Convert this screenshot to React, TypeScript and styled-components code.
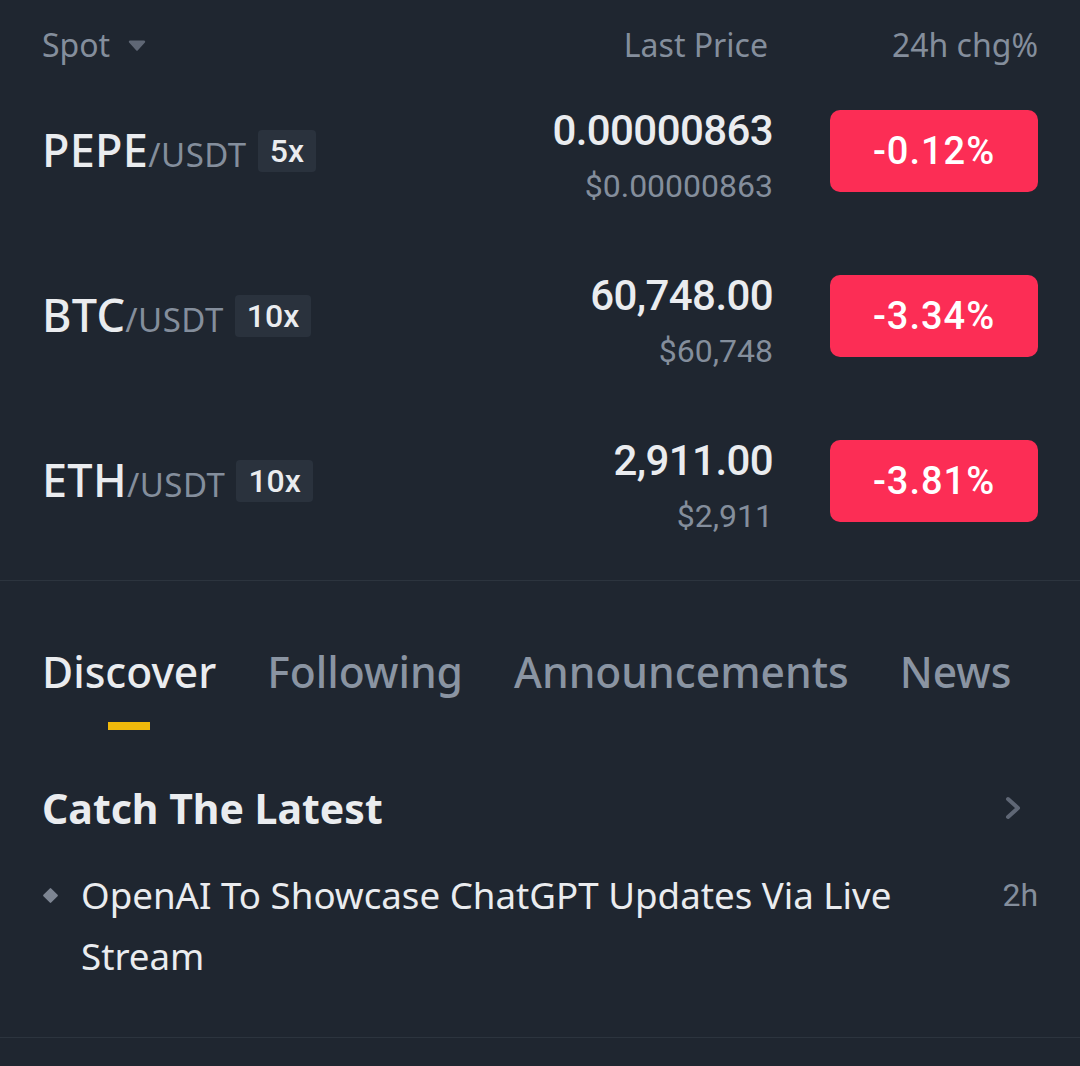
import React from "react";
import styled, { createGlobalStyle } from "styled-components";

const GlobalStyle = createGlobalStyle`
  html, body {
    margin: 0;
    padding: 0;
    background: #1f2630;
  }
  body {
    font-family: "Noto Sans", "Open Sans", sans-serif;
    color: #eaecef;
    -webkit-font-smoothing: antialiased;
  }
  * { box-sizing: border-box; }
`;

const Page = styled.div`
  width: 1080px;
  min-height: 1066px;
  background: #1f2630;
`;

const MarketSection = styled.section`
  border-bottom: 1px solid #2c343e;
  padding-bottom: 17px;
`;

const columns = `
  display: grid;
  grid-template-columns: 1fr auto 208px;
  column-gap: 57px;
  padding: 0 42px;
`;

const MarketHeader = styled.div`
  ${columns}
  padding-top: 22px;
  height: 68px;
  font-size: 32px;
  line-height: 46px;
  color: #848e9c;
`;

const HeaderCell = styled.div<{ $align?: "left" | "right"; $inset?: number }>`
  display: flex;
  align-items: center;
  justify-content: ${(p) => (p.$align === "right" ? "flex-end" : "flex-start")};
  gap: 18px;
  padding-right: ${(p) => p.$inset ?? 0}px;
  white-space: nowrap;
`;

const MarketRow = styled.div`
  ${columns}
  height: 165px;
  align-items: center;
`;

const Pair = styled.div`
  display: flex;
  align-items: center;
`;

const PairText = styled.div`
  display: flex;
  align-items: baseline;
`;

const Base = styled.span`
  font-size: 45px;
  font-weight: 500;
  color: #eaecef;
  line-height: 50px;
  letter-spacing: 0.3px;
`;

const Quote = styled.span`
  font-size: 33px;
  color: #848e9c;
  letter-spacing: 0.5px;
`;

const Leverage = styled.span`
  margin-left: 11px;
  height: 42px;
  padding: 0 12px;
  display: inline-flex;
  align-items: center;
  border-radius: 4px;
  background: #2a323d;
  font-family: Roboto, "Noto Sans", sans-serif;
  font-size: 32px;
  font-weight: 500;
  color: #eaecef;
`;

const PriceCell = styled.div`
  display: flex;
  flex-direction: column;
  align-items: flex-end;
  gap: 12px;
  margin-top: 13px;
  font-family: Roboto, "Noto Sans", sans-serif;
`;

const LastPrice = styled.div`
  font-size: 42px;
  font-weight: 500;
  line-height: 46px;
  letter-spacing: -0.6px;
  color: #eaecef;
`;

const FiatPrice = styled.div`
  font-size: 32px;
  line-height: 40px;
  color: #848e9c;
`;

const ChangeBadge = styled.div<{ $up?: boolean }>`
  height: 82px;
  border-radius: 10px;
  background: ${(p) => (p.$up ? "#2ebd85" : "#fc2d55")};
  display: flex;
  align-items: center;
  justify-content: center;
  font-family: Roboto, "Noto Sans", sans-serif;
  font-size: 38px;
  font-weight: 500;
  letter-spacing: 1px;
  color: #ffffff;
`;

const Tabs = styled.nav`
  display: flex;
  align-items: flex-start;
  gap: 51px;
  padding: 62px 42px 0;
`;

const Tab = styled.div<{ $active?: boolean }>`
  display: flex;
  flex-direction: column;
  align-items: center;
  font-size: 42.6px;
  font-weight: 500;
  line-height: 56px;
  color: ${(p) => (p.$active ? "#eaecef" : "#8a94a2")};
  white-space: nowrap;
`;

const TabIndicator = styled.div`
  margin-top: 23px;
  width: 42px;
  height: 8px;
  background: #f0b90b;
`;

const NewsSection = styled.section`
  padding: 53px 42px 50px;
  border-bottom: 1px solid #2c343e;
`;

const SectionHeader = styled.div`
  display: flex;
  align-items: center;
  justify-content: space-between;
`;

const SectionTitle = styled.h2`
  margin: 0;
  font-size: 41px;
  font-weight: 700;
  line-height: 50px;
  color: #eaecef;
`;

const Chevron = styled.svg`
  width: 18px;
  height: 24px;
  margin-right: 16px;
`;

const NewsItem = styled.div`
  margin-top: 32px;
  display: grid;
  grid-template-columns: 39px 1fr auto;
  column-gap: 40px;
  align-items: start;
`;

const Bullet = styled.div`
  width: 11px;
  height: 11px;
  margin: 25px 0 0 3px;
  background: #7d8592;
  border-radius: 1px;
  transform: rotate(45deg);
`;

const Headline = styled.div`
  margin-left: -40px;
  font-size: 36.7px;
  line-height: 61px;
  color: #eaecef;
`;

const Age = styled.div`
  font-family: Roboto, "Noto Sans", sans-serif;
  font-size: 32px;
  line-height: 61px;
  color: #848e9c;
`;

const Caret = styled.svg`
  width: 18px;
  height: 13px;
`;

type Market = {
  base: string;
  quote: string;
  lev: string;
  price: string;
  fiat: string;
  change: string;
};

const markets: Market[] = [
  { base: "PEPE", quote: "/USDT", lev: "5x", price: "0.00000863", fiat: "$0.00000863", change: "-0.12%" },
  { base: "BTC", quote: "/USDT", lev: "10x", price: "60,748.00", fiat: "$60,748", change: "-3.34%" },
  { base: "ETH", quote: "/USDT", lev: "10x", price: "2,911.00", fiat: "$2,911", change: "-3.81%" },
];

const tabs = ["Discover", "Following", "Announcements", "News"];

export default function App() {
  return (
    <Page>
      <GlobalStyle />
      <MarketSection>
        <MarketHeader>
          <HeaderCell>
            Spot
            <Caret viewBox="0 0 18 13">
              <path d="M2 1.5h14a1.2 1.2 0 0 1 .9 2L9.9 11.3a1.2 1.2 0 0 1-1.8 0L1.1 3.5a1.2 1.2 0 0 1 .9-2z" fill="#5f6775" />
            </Caret>
          </HeaderCell>
          <HeaderCell $align="right" $inset={5}>Last Price</HeaderCell>
          <HeaderCell $align="right">24h chg%</HeaderCell>
        </MarketHeader>
        {markets.map((m) => (
          <MarketRow key={m.base}>
            <Pair>
              <PairText>
                <Base>{m.base}</Base>
                <Quote>{m.quote}</Quote>
              </PairText>
              <Leverage>{m.lev}</Leverage>
            </Pair>
            <PriceCell>
              <LastPrice>{m.price}</LastPrice>
              <FiatPrice>{m.fiat}</FiatPrice>
            </PriceCell>
            <ChangeBadge>{m.change}</ChangeBadge>
          </MarketRow>
        ))}
      </MarketSection>

      <Tabs>
        {tabs.map((t, i) => (
          <Tab key={t} $active={i === 0}>
            {t}
            {i === 0 && <TabIndicator />}
          </Tab>
        ))}
      </Tabs>

      <NewsSection>
        <SectionHeader>
          <SectionTitle>Catch The Latest</SectionTitle>
          <Chevron viewBox="0 0 18 24">
            <path d="M4 3l10 9-10 9" fill="none" stroke="#5f6775" strokeWidth="4" strokeLinecap="round" strokeLinejoin="round" />
          </Chevron>
        </SectionHeader>
        <NewsItem>
          <Bullet />
          <Headline>OpenAI To Showcase ChatGPT Updates Via Live Stream</Headline>
          <Age>2h</Age>
        </NewsItem>
      </NewsSection>
    </Page>
  );
}
